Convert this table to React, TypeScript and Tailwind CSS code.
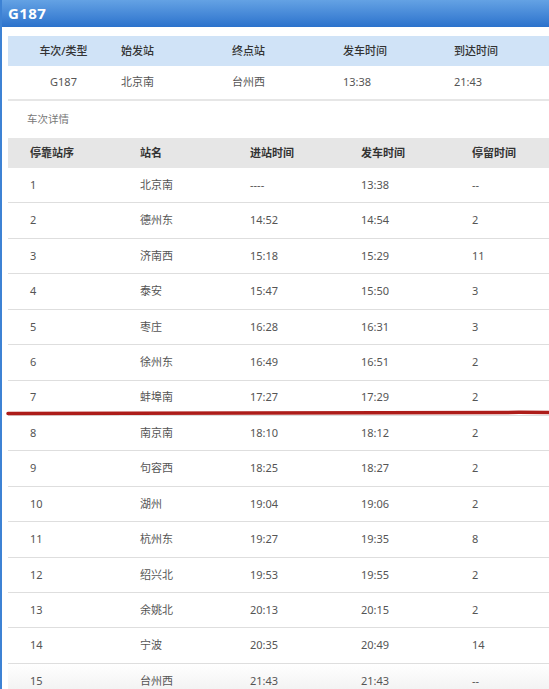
import React from 'react';

const stops: [string, string, string, string, string][] = [
  ['1', '北京南', '----', '13:38', '--'],
  ['2', '德州东', '14:52', '14:54', '2'],
  ['3', '济南西', '15:18', '15:29', '11'],
  ['4', '泰安', '15:47', '15:50', '3'],
  ['5', '枣庄', '16:28', '16:31', '3'],
  ['6', '徐州东', '16:49', '16:51', '2'],
  ['7', '蚌埠南', '17:27', '17:29', '2'],
  ['8', '南京南', '18:10', '18:12', '2'],
  ['9', '句容西', '18:25', '18:27', '2'],
  ['10', '湖州', '19:04', '19:06', '2'],
  ['11', '杭州东', '19:27', '19:35', '8'],
  ['12', '绍兴北', '19:53', '19:55', '2'],
  ['13', '余姚北', '20:13', '20:15', '2'],
  ['14', '宁波', '20:35', '20:49', '14'],
  ['15', '台州西', '21:43', '21:43', '--'],
];

const font = { fontFamily: '"Noto Sans", "Noto Sans CJK SC", sans-serif' };

export default function App() {
  return (
    <div className="relative w-[549px] h-[689px] overflow-hidden bg-white border-l-2 border-[#3d82d4]" style={font}>
      <div className="h-[27px] flex items-center px-[6px] bg-gradient-to-b from-[#64a2e4] to-[#2b72cc]">
        <span className="text-white font-bold text-[15px] tracking-wide">G187</span>
      </div>

      <div className="pl-[6px] pt-[9px]">
        <div className="w-[560px]">
          <div className="flex h-[30px] items-center bg-[#d0e3f7] text-[11px] font-medium text-[#333]">
            <div className="w-[111px] text-center">车次/类型</div>
            <div className="w-[111px] pl-[2px]">始发站</div>
            <div className="w-[111px] pl-[2px]">终点站</div>
            <div className="w-[111px] pl-[2px]">发车时间</div>
            <div className="w-[111px] pl-[2px]">到达时间</div>
          </div>
          <div className="flex h-[35px] items-center border-b-2 border-[#e6e6e6] text-[11px] text-[#555]">
            <div className="w-[111px] text-center">G187</div>
            <div className="w-[111px] pl-[2px]">北京南</div>
            <div className="w-[111px] pl-[2px]">台州西</div>
            <div className="w-[111px] pl-[2px]">13:38</div>
            <div className="w-[111px] pl-[2px]">21:43</div>
          </div>

          <div className="h-[37px] flex items-center pl-[19px] text-[10.5px] text-[#777]">车次详情</div>

          <div className="flex h-[30px] items-center bg-[#e6e6e6] text-[11px] font-bold text-[#333]">
            <div className="w-[111px] pl-[22px]">停靠站序</div>
            <div className="w-[110px] pl-[21px]">站名</div>
            <div className="w-[111px] pl-[21px]">进站时间</div>
            <div className="w-[111px] pl-[21px]">发车时间</div>
            <div className="w-[111px] pl-[21px]">停留时间</div>
          </div>

          {stops.map((s, i) => (
            <div
              key={s[0]}
              className={`flex h-[35.43px] items-center text-[11px] text-[#555] ${
                i === stops.length - 1 ? 'bg-gradient-to-b from-white to-[#eeeeee]' : 'border-b border-[#dedede]'
              }`}
            >
              <div className="w-[111px] pl-[22px]">{s[0]}</div>
              <div className="w-[110px] pl-[21px]">{s[1]}</div>
              <div className="w-[111px] pl-[21px]">{s[2]}</div>
              <div className="w-[111px] pl-[21px]">{s[3]}</div>
              <div className="w-[111px] pl-[21px]">{s[4]}</div>
            </div>
          ))}
        </div>
      </div>

      {/* hand-drawn red marker under stop 7 */}
      <svg className="absolute left-0 top-[405px]" width="549" height="14" viewBox="0 0 549 14">
        <path
          d="M6 8.5 C 150 7.5, 350 6.5, 547 7.5"
          stroke="#ad1c19"
          strokeWidth="3.5"
          fill="none"
          strokeLinecap="round"
        />
      </svg>
    </div>
  );
}
